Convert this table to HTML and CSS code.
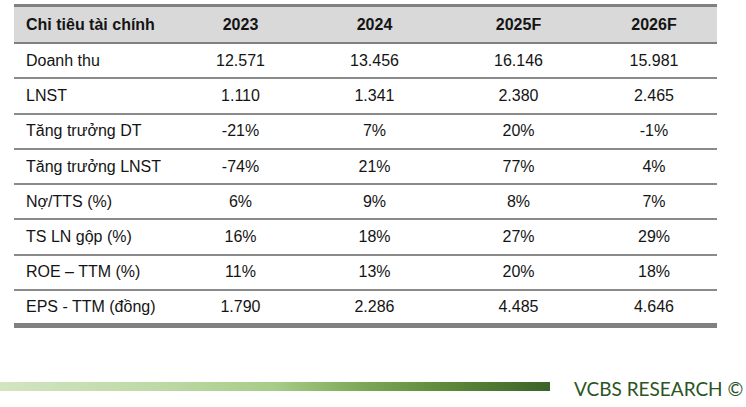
FILE: index.html
```html
<!DOCTYPE html>
<html lang="vi">
<head>
<meta charset="utf-8">
<title>Chỉ tiêu tài chính</title>
<link rel="stylesheet" href="styles.css">
</head>
<body>
<div class="page">
  <table class="fin">
    <colgroup>
      <col class="c-label"><col class="c1"><col class="c2"><col class="c3"><col class="c4">
    </colgroup>
    <thead>
      <tr><th class="label">Chỉ tiêu tài chính</th><th>2023</th><th>2024</th><th>2025F</th><th>2026F</th></tr>
    </thead>
    <tbody>
      <tr><td class="label">Doanh thu</td><td>12.571</td><td>13.456</td><td>16.146</td><td>15.981</td></tr>
      <tr><td class="label">LNST</td><td>1.110</td><td>1.341</td><td>2.380</td><td>2.465</td></tr>
      <tr><td class="label">Tăng trưởng DT</td><td>-21%</td><td>7%</td><td>20%</td><td>-1%</td></tr>
      <tr><td class="label">Tăng trưởng LNST</td><td>-74%</td><td>21%</td><td>77%</td><td>4%</td></tr>
      <tr><td class="label">Nợ/TTS (%)</td><td>6%</td><td>9%</td><td>8%</td><td>7%</td></tr>
      <tr><td class="label">TS LN gộp (%)</td><td>16%</td><td>18%</td><td>27%</td><td>29%</td></tr>
      <tr><td class="label">ROE – TTM (%)</td><td>11%</td><td>13%</td><td>20%</td><td>18%</td></tr>
      <tr><td class="label">EPS - TTM (đồng)</td><td>1.790</td><td>2.286</td><td>4.485</td><td>4.646</td></tr>
    </tbody>
  </table>
  <footer class="footer">
    <div class="bar"></div>
    <div class="brand">VCBS RESEARCH ©</div>
  </footer>
</div>
</body>
</html>
```

FILE: styles.css
```css
html, body {
  margin: 0;
  padding: 0;
  background: #ffffff;
}

.page {
  width: 746px;
  height: 407px;
  padding-top: 4px;
  box-sizing: border-box;
  display: flex;
  flex-direction: column;
}

.fin {
  margin-left: 14px;
  width: 703px;
  border-collapse: collapse;
  table-layout: fixed;
  font-family: "Liberation Sans", Arial, sans-serif;
  font-size: 16px;
  color: #141414;
}

.c-label { width: 164px; }
.c1 { width: 125px; }
.c2 { width: 143px; }
.c3 { width: 145px; }
.c4 { width: 126px; }

.fin th,
.fin td {
  padding: 0;
  text-align: center;
  vertical-align: middle;
  line-height: 18px;
}

.fin .label {
  text-align: left;
  padding-left: 12px;
}

.fin thead tr {
  background: #d9d9d9;
  border-top: 3px solid #808080;
  border-bottom: 2px solid #808080;
}

.fin th {
  height: 35px;
  font-weight: bold;
}

.fin td {
  height: 33.3px;
}

.fin tbody tr {
  border-bottom: 2px solid #8a8a8a;
}

.fin tbody tr:last-child {
  border-bottom: 5px solid #808080;
}

.fin tbody tr:last-child td {
  height: 32px;
}

.footer {
  margin-top: auto;
  margin-bottom: 8px;
  display: flex;
  align-items: flex-start;
  gap: 24px;
}

.bar {
  width: 550px;
  height: 9px;
  margin-top: 3px;
  background: linear-gradient(to right, #d2e5c1 0%, #bcd9a4 30%, #a6cc87 50%, #7ba856 66%, #5e8c3b 80%, #3a6328 100%);
}

.brand {
  font-family: Lato, "Open Sans", sans-serif;
  font-size: 19px;
  color: #2c5424;
  white-space: nowrap;
  line-height: 20px;
}
```
